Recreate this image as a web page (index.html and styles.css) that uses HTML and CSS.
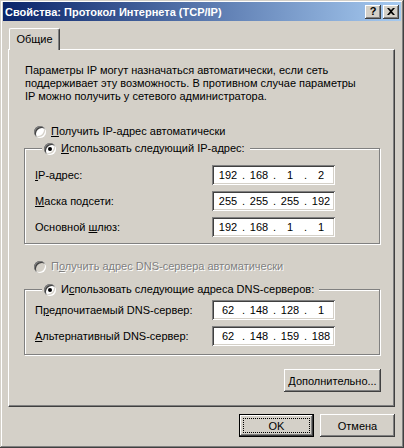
FILE: index.html
```html
<!DOCTYPE html>
<html lang="ru">
  <head>
    <meta charset="UTF-8" />
    <title>Свойства: Протокол Интернета (TCP/IP)</title>
    <link rel="stylesheet" href="styles.css">
  </head>
  <body>
    <div class="window">
      <div class="titlebar">
        <span class="title">Свойства: Протокол Интернета (TCP/IP)</span>
        <div class="caption-buttons">
          <button class="cap-btn help">?</button>
          <button class="cap-btn close">
            <svg width="8" height="7" viewBox="0 0 8 7">
              <path d="M0 0h2l2 2 2-2h2L5 3.5 8 7H6L4 5 2 7H0l3-3.5z" fill="#000" />
            </svg>
          </button>
        </div>
      </div>

      <div class="client">
        <div class="tabs">
          <div class="tab active">Общие</div>
        </div>

        <div class="panel">
          <p class="intro">
            Параметры IP могут назначаться автоматически, если сеть<br>
            поддерживает эту возможность. В противном случае параметры<br>
            IP можно получить у сетевого администратора.
          </p>

          <div class="option first">
            <span class="radio"></span>
            <span><u>П</u>олучить IP-адрес автоматически</span>
          </div>

          <fieldset class="group group-ip">
            <legend>
              <span class="option">
                <span class="radio checked"></span>
                <span><u>И</u>спользовать следующий IP-адрес:</span>
              </span>
            </legend>
            <div class="field-row">
              <span><u>I</u>P-адрес:</span>
              <div class="ip-box">
                <span>192</span><span>.</span><span>168</span><span>.</span><span>1</span><span>.</span><span>2</span>
              </div>
            </div>
            <div class="field-row">
              <span><u>М</u>аска подсети:</span>
              <div class="ip-box">
                <span>255</span><span>.</span><span>255</span><span>.</span><span>255</span><span>.</span><span>192</span>
              </div>
            </div>
            <div class="field-row">
              <span>Основной <u>ш</u>люз:</span>
              <div class="ip-box">
                <span>192</span><span>.</span><span>168</span><span>.</span><span>1</span><span>.</span><span>1</span>
              </div>
            </div>
          </fieldset>

          <div class="option disabled">
            <span class="radio"></span>
            <span>П<u>о</u>лучить адрес DNS-сервера автоматически</span>
          </div>

          <fieldset class="group group-dns">
            <legend>
              <span class="option">
                <span class="radio checked"></span>
                <span>И<u>с</u>пользовать следующие адреса DNS-серверов:</span>
              </span>
            </legend>
            <div class="field-row">
              <span>П<u>р</u>едпочитаемый DNS-сервер:</span>
              <div class="ip-box">
                <span>62</span><span>.</span><span>148</span><span>.</span><span>128</span><span>.</span><span>1</span>
              </div>
            </div>
            <div class="field-row">
              <span><u>А</u>льтернативный DNS-сервер:</span>
              <div class="ip-box">
                <span>62</span><span>.</span><span>148</span><span>.</span><span>159</span><span>.</span><span>188</span>
              </div>
            </div>
          </fieldset>

          <div class="panel-actions">
            <button class="btn wide"><u>Д</u>ополнительно...</button>
          </div>
        </div>

        <div class="dialog-buttons">
          <button class="btn default">OK</button>
          <button class="btn">Отмена</button>
        </div>
      </div>
    </div>
  </body>
</html>
```

FILE: styles.css
```css
* {
  box-sizing: border-box;
}
body {
  margin: 0;
  background: #d4d0c8;
  font-family: "Liberation Sans", Arial, sans-serif;
  font-size: 11px;
  color: #000;
}
u {
  text-underline-offset: 1px;
}

/* window frame */
.window {
  width: 404px;
  height: 448px;
  padding: 2px 3px 3px 3px;
  background: #d4d0c8;
  box-shadow: inset -1px -1px 0 #404040, inset 1px 1px 0 #d4d0c8,
    inset -2px -2px 0 #808080, inset 2px 2px 0 #fff;
}
.titlebar {
  height: 19px;
  display: flex;
  align-items: center;
  justify-content: space-between;
  padding: 0 2px 0 2px;
  background: linear-gradient(to right, #0a246a, #a6caf0);
}
.title {
  color: #fff;
  font-weight: bold;
}
.caption-buttons {
  display: flex;
  gap: 2px;
}
.cap-btn {
  width: 16px;
  height: 14px;
  padding: 0;
  border: 0;
  display: flex;
  align-items: center;
  justify-content: center;
  background: #d4d0c8;
  font-family: inherit;
  font-size: 11px;
  font-weight: bold;
  line-height: 1;
  box-shadow: inset -1px -1px 0 #404040, inset 1px 1px 0 #fff,
    inset -2px -2px 0 #808080, inset 2px 2px 0 #d4d0c8;
}

/* tabs */
.client {
  padding: 7px 6px 0 5px;
}
.tabs {
  display: flex;
  padding-left: 1px;
}
.tab {
  position: relative;
  width: 51px;
  height: 22px;
  margin-bottom: -1px;
  padding-top: 4px;
  text-align: center;
  background: #d4d0c8;
  border-left: 1px solid #fff;
  border-top: 1px solid #fff;
  border-right: 1px solid #404040;
  border-radius: 2px 2px 0 0;
  box-shadow: inset -1px 0 0 #808080;
}
.panel {
  height: 358px;
  border: 1px solid;
  border-color: #fff #404040 #404040 #fff;
  box-shadow: inset -1px -1px 0 #808080;
  padding-top: 14px;
}
.intro {
  margin: 0;
  padding-left: 16px;
  line-height: 13px;
}

/* radio options */
.option {
  display: flex;
  align-items: center;
  gap: 5px;
  height: 13px;
  line-height: 13px;
}
.panel > .option {
  padding-left: 25px;
}
.option.first {
  margin-top: 22px;
}
.option.disabled {
  margin-top: 16px;
  color: #808080;
  text-shadow: 1px 1px 0 #fff;
}
.radio {
  position: relative;
  flex: none;
  width: 12px;
  height: 12px;
  border-radius: 50%;
  background: #fff;
  box-shadow: inset 1px 1px 0 #808080, inset -1px -1px 0 #fff,
    inset 2px 2px 0 #404040, inset -2px -2px 0 #d4d0c8;
}
.disabled .radio {
  background: #d4d0c8;
}
.radio.checked::after {
  content: "";
  position: absolute;
  left: 4px;
  top: 4px;
  width: 4px;
  height: 4px;
  border-radius: 50%;
  background: #000;
}

/* group boxes */
.group {
  min-width: 0;
  margin: 4px 14px 0 15px;
  padding: 0 0 3px 10px;
  border: 1px solid #808080;
  box-shadow: inset 1px 1px 0 #fff, 1px 1px 0 #fff;
}
.group legend {
  margin-left: 7px;
  padding: 0 5px 0 2px;
  background: #d4d0c8;
}
.group-ip {
  padding-top: 10px;
  padding-bottom: 6px;
}
.group-dns {
  margin-top: 10px;
  padding-top: 4px;
  padding-bottom: 8px;
}
.field-row {
  display: grid;
  grid-template-columns: 177px 123px;
  align-items: center;
  height: 20px;
  margin-bottom: 6px;
}
.field-row:last-child {
  margin-bottom: 0;
}
.ip-box {
  height: 20px;
  display: grid;
  grid-template-columns: 24px 7px 24px 7px 24px 7px 24px;
  align-items: center;
  padding-left: 4px;
  text-align: center;
  background: #fff;
  box-shadow: inset 1px 1px 0 #808080, inset -1px -1px 0 #fff,
    inset 2px 2px 0 #404040, inset -2px -2px 0 #d4d0c8;
}

/* push buttons */
.btn {
  position: relative;
  width: 75px;
  height: 23px;
  padding: 0;
  border: 0;
  background: #d4d0c8;
  font-family: inherit;
  font-size: 11px;
  color: #000;
  box-shadow: inset -1px -1px 0 #404040, inset 1px 1px 0 #fff,
    inset -2px -2px 0 #808080, inset 2px 2px 0 #d4d0c8;
}
.btn.wide {
  width: 97px;
}
.btn.default {
  border: 1px solid #000;
}
.btn.default::after {
  content: "";
  position: absolute;
  inset: 3px;
  border: 1px dotted #000;
}
.panel-actions {
  display: flex;
  justify-content: flex-end;
  margin: 14px 13px 0 0;
}
.dialog-buttons {
  display: flex;
  justify-content: flex-end;
  gap: 6px;
  margin-top: 7px;
}
```
